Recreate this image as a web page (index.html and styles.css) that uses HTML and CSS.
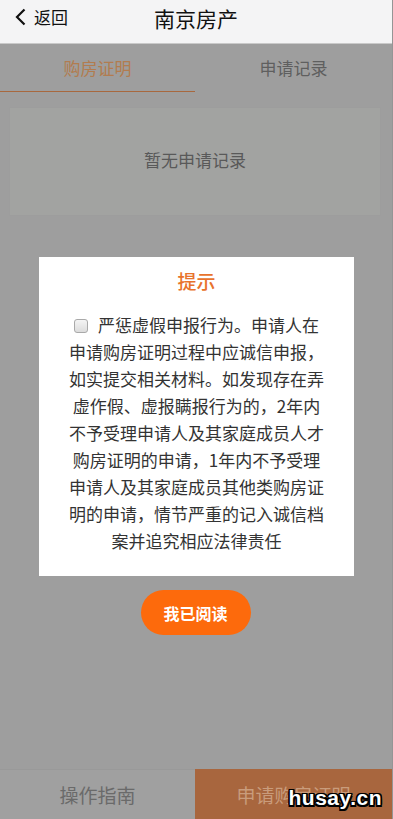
FILE: index.html
```html
<!DOCTYPE html>
<html lang="zh">
<head>
<meta charset="utf-8">
<title>南京房产</title>
<link rel="stylesheet" href="styles.css">
</head>
<body>
<div class="app">
  <header class="topbar">
    <div class="back">
      <svg class="chev" width="12" height="18" viewBox="0 0 12 18"><polyline points="9.5,1.5 2,9 9.5,16.5" fill="none" stroke="#111" stroke-width="2.2" stroke-linejoin="miter"/></svg>
      <span>返回</span>
    </div>
    <h1 class="title">南京房产</h1>
  </header>
  <main class="page">
    <nav class="tabs">
      <div class="tab active">购房证明</div>
      <div class="tab">申请记录</div>
    </nav>
    <section class="empty">暂无申请记录</section>
    <div class="spacer"></div>
    <footer class="bottombar">
      <div class="guide">操作指南</div>
      <div class="apply">申请购房证明</div>
    </footer>
  </main>
  <div class="modal-layer">
    <div class="modal">
      <div class="modal-title">提示</div>
      <p class="modal-text"><span class="check"></span>严惩虚假申报行为。申请人在申请购房证明过程中应诚信申报，如实提交相关材料。如发现存在弄虚作假、虚报瞒报行为的，2年内不予受理申请人及其家庭成员人才购房证明的申请，1年内不予受理申请人及其家庭成员其他类购房证明的申请，情节严重的记入诚信档案并追究相应法律责任</p>
    </div>
    <button class="read-btn">我已阅读</button>
  </div>
  <div class="watermark">husay.cn</div>
</div>
</body>
</html>
```
FILE: styles.css
```css
* { box-sizing: border-box; }
html, body { margin: 0; padding: 0; }
body {
  font-family: "Noto Sans CJK SC", "Noto Sans", sans-serif;
  background: #9e9e9e;
}
.app {
  position: relative;
  width: 393px;
  height: 819px;
  display: flex;
  flex-direction: column;
  overflow: hidden;
  border-right: 1px solid #959595;
}
.topbar {
  height: 44px;
  flex: none;
  background: #f4f4f5;
  border-bottom: 1px solid #c9c9c9;
  display: flex;
  align-items: flex-start;
  justify-content: center;
  position: relative;
}
.back {
  position: absolute;
  left: 15px;
  top: 6px;
  display: flex;
  align-items: center;
  gap: 7px;
  font-size: 17px;
  color: #111;
  line-height: 22px;
}
.chev { display: block; }
.title {
  margin: 0;
  font-size: 21px;
  font-weight: 400;
  color: #111;
  line-height: 36px;
}
.page {
  flex: 1;
  display: flex;
  flex-direction: column;
  background: #9e9e9e;
}
.tabs {
  height: 48px;
  display: flex;
  flex: none;
}
.tab {
  flex: 1;
  display: flex;
  align-items: center;
  justify-content: center;
  font-size: 17px;
  color: #5f5f5f;
  padding-bottom: 1px;
}
.tab.active {
  color: #b27c4f;
  border-bottom: 1.5px solid #a8683e;
  flex: 0 0 195px;
}
.empty {
  margin: 16px 12px 0 10px;
  height: 107px;
  background: #a2a3a1;
  box-shadow: 0 0 1px #9a9a9a;
  display: flex;
  align-items: center;
  justify-content: center;
  font-size: 17px;
  color: #595959;
  padding-bottom: 4px;
}
.spacer { flex: 1; }
.bottombar {
  height: 50px;
  display: flex;
  flex: none;
}
.guide {
  flex: 0 0 195px;
  display: flex;
  align-items: center;
  justify-content: center;
  background: #a0a0a0;
  color: #6a6a6a;
  font-size: 19px;
  border-top: 1px solid #999;
}
.apply {
  flex: 1;
  display: flex;
  align-items: center;
  justify-content: center;
  background: #a8663e;
  color: #c99c7c;
  font-size: 19px;
}
.modal-layer {
  position: absolute;
  left: 0;
  top: 0;
  width: 392px;
  padding-top: 257px;
  display: flex;
  flex-direction: column;
  align-items: center;
}
.modal {
  width: 315px;
  margin-left: 1px;
  background: #fff;
  padding: 10px 28px 22px;
  text-align: center;
}
.modal-title {
  font-size: 19px;
  font-weight: 500;
  color: #e8732c;
  line-height: 28px;
}
.modal-text {
  margin: 16px 0 0;
  font-size: 17px;
  line-height: 27px;
  color: #333;
  text-align: center;
}
.check {
  display: inline-block;
  width: 14px;
  height: 14px;
  border: 1px solid #a9a9a9;
  border-radius: 3px;
  background: linear-gradient(#f4f4f4, #dcdcdc);
  vertical-align: -1px;
  margin-right: 10px;
}
.read-btn {
  margin-top: 14px;
  width: 110px;
  height: 45px;
  border: none;
  border-radius: 23px;
  background: #fd6a0c;
  color: #fff;
  font-family: inherit;
  font-size: 16px;
  font-weight: 700;
  margin-left: -1px;
}
.watermark {
  position: absolute;
  right: 10px;
  bottom: 9px;
  font-family: "Liberation Sans", "DejaVu Sans", sans-serif;
  font-weight: 700;
  font-size: 21px;
  color: #fff;
  letter-spacing: 0.5px;
  text-shadow: -1.5px -1.5px 0 #000, 1.5px -1.5px 0 #000, -1.5px 1.5px 0 #000, 1.5px 1.5px 0 #000, 0 1.5px 0 #000, 0 -1.5px 0 #000, 1.5px 0 0 #000, -1.5px 0 0 #000;
}
```
